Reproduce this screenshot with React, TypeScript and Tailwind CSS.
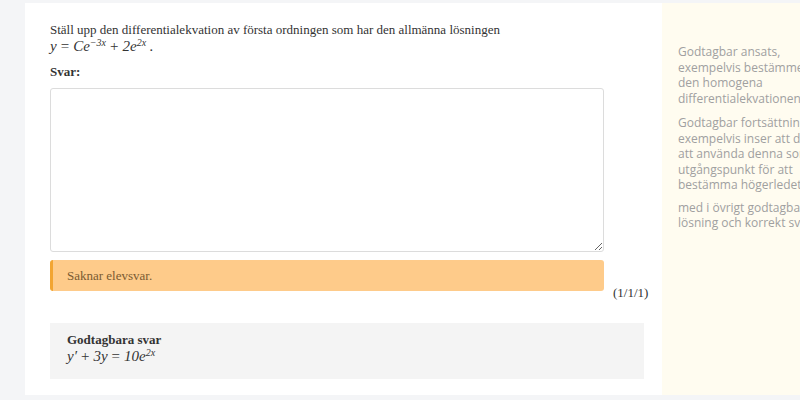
export default function App() {
  const serif = { fontFamily: '"Liberation Serif", "Times New Roman", serif' };
  return (
    <div className="w-[800px] h-[400px] overflow-hidden bg-[#f4f5f7] pt-[3px] pl-[25px] flex items-start">
      <div className="w-[637px] h-[392px] bg-white pl-[25px] pt-[19px] text-[#333]" style={serif}>
        <p className="text-[13px] leading-[16px]">
          Ställ upp den differentialekvation av första ordningen som har den allmänna lösningen
        </p>
        <p className="text-[15px] leading-[17px] italic">
          y<span className="not-italic mx-[4px]">=</span>Ce<sup className="text-[10px]">−3x</sup>
          <span className="not-italic mx-[4px]">+</span>2e<sup className="text-[10px]">2x</sup> .
        </p>
        <p className="mt-[9px] text-[13px] font-bold leading-[16px]">Svar:</p>
        <div className="mt-[8px] flex items-end">
          <textarea
            className="w-[554px] h-[164px] border border-[#dcdcdc] rounded-[3px] bg-white resize-y"
            readOnly
          />
        </div>
        <div className="mt-[8px] flex items-end">
          <div className="w-[554px] h-[31px] rounded-[3px] bg-[#fecb8a] border-l-[3px] border-[#f2a532] pl-[14px] flex items-center text-[13px] text-[#7a5b32]">
            Saknar elevsvar.
          </div>
          <span className="ml-[9px] text-[13px] leading-[13px] -mb-[8px]">(1/1/1)</span>
        </div>
        <div className="mt-[32px] w-[594px] h-[56px] bg-[#f4f4f4] pl-[17px] pt-[9px]">
          <p className="text-[13px] font-bold leading-[16px]">Godtagbara svar</p>
          <p className="text-[15px] leading-[17px] italic">
            y′<span className="not-italic mx-[4px]">+</span>3y<span className="not-italic mx-[4px]">=</span>10e
            <sup className="text-[10px]">2x</sup>
          </p>
        </div>
      </div>
      <div
        className="flex-1 h-[392px] bg-[#fffcf0] overflow-hidden pl-[16px] pt-[41px] text-[12px] leading-[15.5px] text-[#a0a0a0] whitespace-nowrap"
        style={{ fontFamily: '"Open Sans", "Noto Sans", sans-serif' }}
      >
        <p>Godtagbar ansats,</p>
        <p>exempelvis bestämmer</p>
        <p>den homogena</p>
        <p>differentialekvationen som</p>
        <p className="mt-[9px]">Godtagbar fortsättning,</p>
        <p>exempelvis inser att den</p>
        <p>att använda denna som</p>
        <p>utgångspunkt för att</p>
        <p>bestämma högerledet</p>
        <p className="mt-[7px]">med i övrigt godtagbar</p>
        <p>lösning och korrekt svar</p>
      </div>
    </div>
  );
}
